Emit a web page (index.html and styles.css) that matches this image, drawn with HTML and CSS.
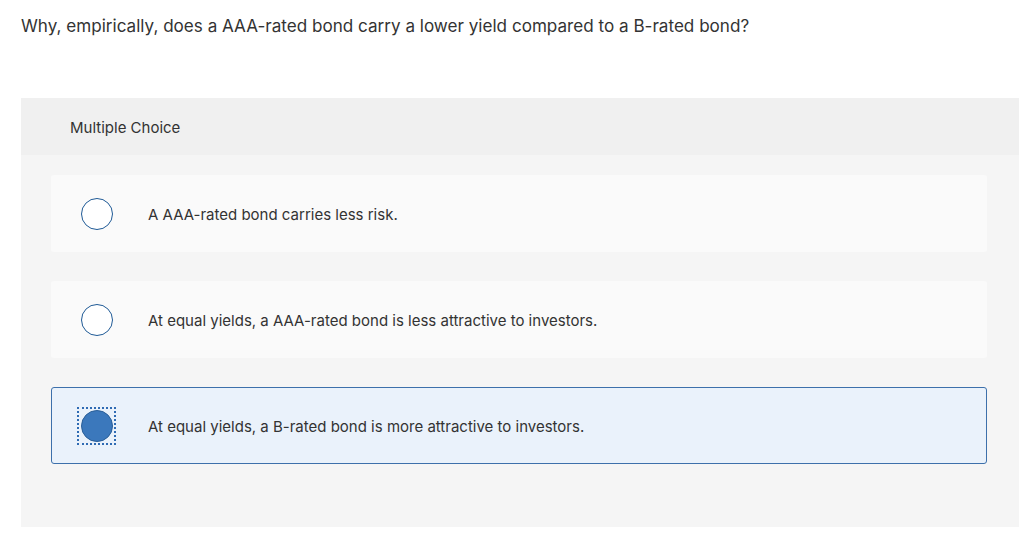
FILE: index.html
```html
<!DOCTYPE html>
<html>
<head>
<meta charset="utf-8">
<link rel="stylesheet" href="styles.css">
</head>
<body>
<div class="page">
  <p class="question">Why, empirically, does a AAA-rated bond carry a lower yield compared to a B-rated bond?</p>
  <div class="panel">
    <div class="panel-head">Multiple Choice</div>
    <div class="panel-body">
      <label class="option">
        <span class="radio-wrap"><span class="radio"></span></span>
        <span class="option-text">A AAA-rated bond carries less risk.</span>
      </label>
      <label class="option">
        <span class="radio-wrap"><span class="radio"></span></span>
        <span class="option-text">At equal yields, a AAA-rated bond is less attractive to investors.</span>
      </label>
      <label class="option selected">
        <span class="radio-wrap focus"><span class="radio checked"></span></span>
        <span class="option-text">At equal yields, a B-rated bond is more attractive to investors.</span>
      </label>
    </div>
  </div>
</div>
</body>
</html>
```
FILE: styles.css
```css
html, body {
  margin: 0;
  padding: 0;
  background: #ffffff;
}
body {
  font-family: Inter, Lato, "Liberation Sans", sans-serif;
  color: #333333;
}
.page {
  padding: 12px 5px 0 21px;
}
.question {
  margin: 0;
  padding-top: 1px;
  font-size: 17.1px;
  line-height: 25px;
  color: #333333;
}
.panel {
  margin-top: 60px;
  background: #f5f5f5;
  width: 998px;
  height: 429px;
}
.panel-head {
  background: #f0f0f0;
  height: 57px;
  display: flex;
  align-items: center;
  padding-left: 49px;
  padding-top: 1px;
  box-sizing: border-box;
  font-size: 15px;
  color: #333333;
}
.panel-body {
  padding: 20px 32px 0 30px;
  display: flex;
  flex-direction: column;
  gap: 29px;
}
.option {
  display: flex;
  align-items: center;
  height: 77px;
  background: #fafafa;
  border-radius: 3px;
  box-sizing: border-box;
  border: 1px solid transparent;
  width: 936px;
}
.option.selected {
  background: #eaf2fb;
  border-color: #3d70ab;
}
.radio-wrap {
  width: 37px;
  height: 36px;
  display: flex;
  align-items: center;
  justify-content: center;
  margin-left: 26px;
  box-sizing: border-box;
}
.radio-wrap.focus {
  outline: 2px dotted #2f6bb3;
  outline-offset: -1px;
}
.radio {
  width: 32px;
  height: 32px;
  border-radius: 50%;
  border: 1.5px solid #1f5a96;
  background: #ffffff;
  box-sizing: border-box;
}
.radio.checked {
  background: #3b78bc;
  border-color: #2a5f99;
}
.option-text {
  margin-left: 33px;
  padding-top: 2px;
  font-size: 15px;
  color: #333333;
}
```
